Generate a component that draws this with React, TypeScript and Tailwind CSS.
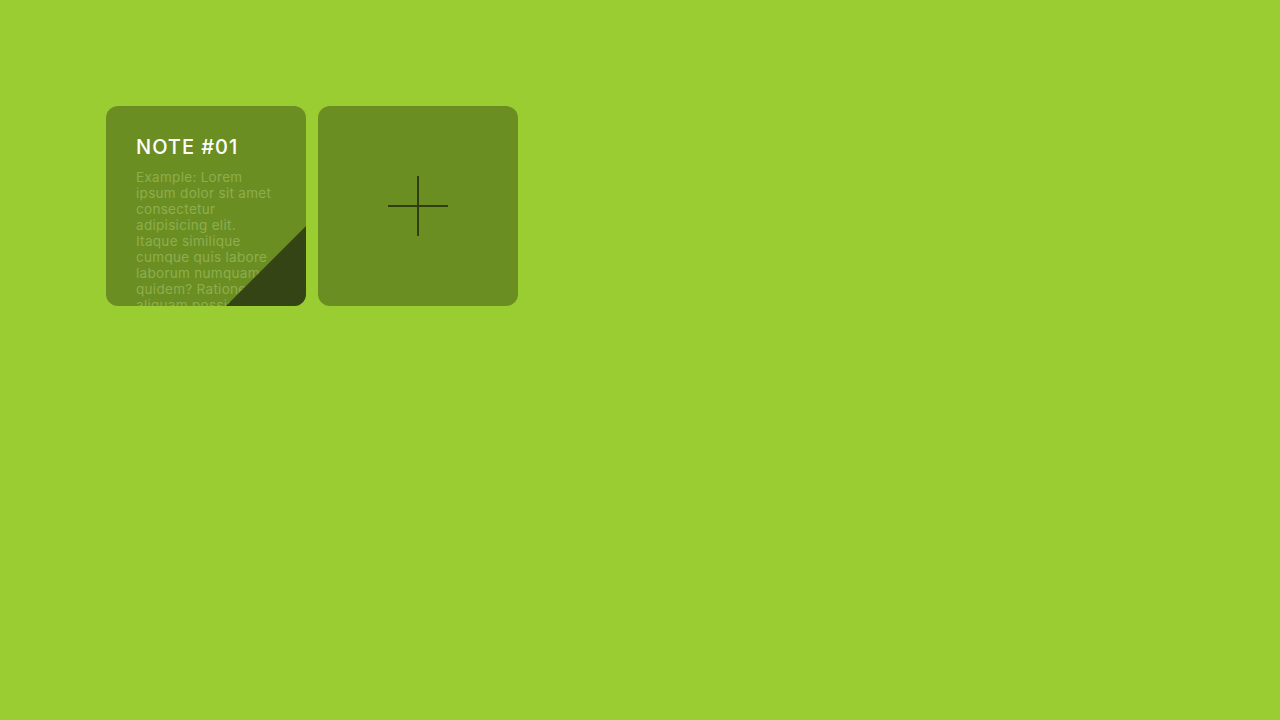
import { useState } from 'react';

type Note = { id: number; title: string; body: string };

const initialNotes: Note[] = [
  {
    id: 1,
    title: 'NOTE #01',
    body: 'Example: Lorem ipsum dolor sit amet consectetur adipisicing elit. Itaque similique cumque quis labore laborum numquam quidem? Ratione, aliquam possimus.',
  },
];

const NoteCard = ({ note }: { note: Note }) => (
  <div className="relative w-[200px] h-[200px] rounded-xl bg-[#6b8e23] overflow-hidden px-[30px] pt-[29px]">
    <h2 className="text-white text-[20px] leading-[24px] font-medium tracking-[1px] font-['Inter',sans-serif]">
      {note.title}
    </h2>
    <p className="mt-[10px] w-[140px] text-[13.5px] leading-[16px] tracking-[0.3px] text-[#8fad4e] font-['Inter',sans-serif]">
      {note.body}
    </p>
    <div
      className="absolute right-0 bottom-0 w-[80px] h-[80px] bg-[#344414]"
      style={{ clipPath: 'polygon(100% 0, 100% 100%, 0 100%)' }}
    />
  </div>
);

const App = () => {
  const [notes, setNotes] = useState<Note[]>(initialNotes);

  const addNote = () => {
    const n = notes.length + 1;
    setNotes([
      ...notes,
      { id: n, title: `NOTE #${String(n).padStart(2, '0')}`, body: '' },
    ]);
  };

  return (
    <div className="min-h-screen bg-[#9acd32] px-[106px] pt-[106px]">
      <div className="flex flex-wrap gap-3">
        {notes.map((note) => (
          <NoteCard key={note.id} note={note} />
        ))}
        <button
          onClick={addNote}
          className="w-[200px] h-[200px] rounded-xl bg-[#6b8e23] flex items-center justify-center"
        >
          <svg width="60" height="60" viewBox="0 0 60 60">
            <path d="M30 0v60M0 30h60" stroke="#2e3e0e" strokeWidth="2" />
          </svg>
        </button>
      </div>
    </div>
  );
};

export default App;
